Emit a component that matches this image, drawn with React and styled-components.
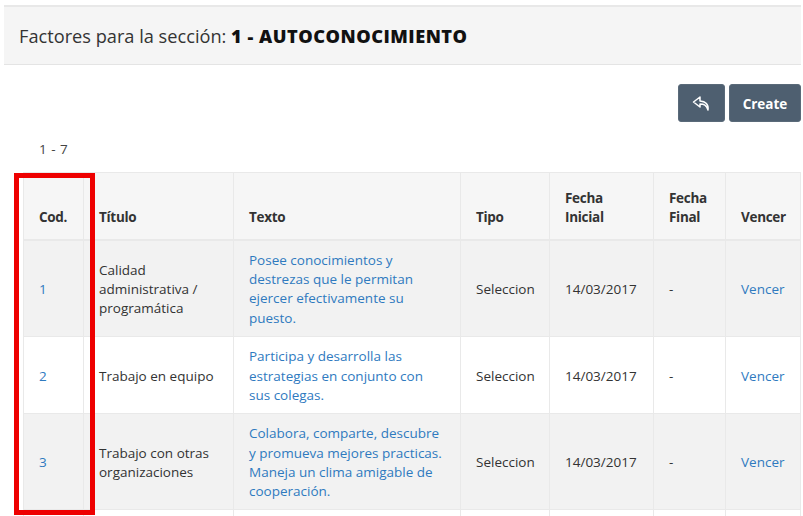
import React from 'react'
import styled, { createGlobalStyle } from 'styled-components'

const GlobalStyle = createGlobalStyle`
  html, body {
    margin: 0;
    padding: 0;
    background: #fff;
  }
  body {
    height: 516px;
    overflow: hidden;
    font-family: "Open Sans", "Liberation Sans", sans-serif;
    font-size: 13.5px;
    color: #333;
  }
`

const Page = styled.div`
  position: relative;
  height: 516px;
  padding: 5px 2px 0 4px;
  box-sizing: border-box;
  overflow: hidden;
`

const Header = styled.div`
  height: 60px;
  box-sizing: border-box;
  display: flex;
  align-items: center;
  padding-left: 15px;
  background: #f5f5f5;
  border-top: 2px solid #e8e8e8;
  border-bottom: 1px solid #e4e4e4;
  font-size: 18.2px;
  color: #333;
  white-space: pre;

  strong {
    color: #111;
    font-weight: 800;
    letter-spacing: 0.5px;
  }
`

const Toolbar = styled.div`
  display: flex;
  justify-content: flex-end;
  gap: 4px;
  margin-top: 19px;
`

const ToolButton = styled.button`
  width: ${p => p.$width}px;
  height: 38px;
  display: flex;
  align-items: center;
  justify-content: center;
  padding: 1px 0 0;
  border: 1px solid #5a6a79;
  border-radius: 3px;
  background: #4e5f70;
  color: #fff;
  font-family: inherit;
  font-size: 13.5px;
  font-weight: 700;
`

const Count = styled.div`
  margin: 18px 0 14px 35px;
  line-height: 18px;
  word-spacing: 1px;
  color: #444;
`

const Table = styled.table`
  width: 777px;
  margin-left: 19px;
  border-collapse: collapse;
  table-layout: fixed;
  line-height: 19.2px;
`

const Head = styled.th`
  width: ${p => p.$width}px;
  height: 67px;
  padding: 0 15px 11px;
  box-sizing: border-box;
  vertical-align: bottom;
  text-align: left;
  background: #f6f6f6;
  border: 1px solid #e9e9e9;
  border-bottom-width: 2px;
  color: #333;
  font-weight: 700;
  letter-spacing: -0.3px;
`

const Row = styled.tr`
  background: ${p => (p.$striped ? '#f2f2f2' : '#fff')};
`

const Cell = styled.td`
  padding: 10.5px 15px 8px;
  border: 1px solid #e9e9e9;
  vertical-align: middle;
  color: #333;
`

const CellLink = styled.a`
  color: #2f7abf;
  text-decoration: none;
`

const Highlight = styled.div`
  position: absolute;
  left: 14px;
  top: 173px;
  width: 71px;
  height: 332px;
  border: 5px solid #ee0000;
  pointer-events: none;
`

const columns = [
  { label: 'Cod.', width: 60 },
  { label: 'Título', width: 150 },
  { label: 'Texto', width: 227 },
  { label: 'Tipo', width: 89 },
  { label: 'Fecha Inicial', width: 104 },
  { label: 'Fecha Final', width: 72 },
  { label: 'Vencer', width: 75 },
]

const rows = [
  {
    cod: 1,
    titulo: 'Calidad administrativa / programática',
    texto: 'Posee conocimientos y destrezas que le permitan ejercer efectivamente su puesto.',
  },
  {
    cod: 2,
    titulo: 'Trabajo en equipo',
    texto: 'Participa y desarrolla las estrategias en conjunto con sus colegas.',
  },
  {
    cod: 3,
    titulo: 'Trabajo con otras organizaciones',
    texto: 'Colabora, comparte, descubre y promueva mejores practicas. Maneja un clima amigable de cooperación.',
  },
]

function BackIcon() {
  return (
    <svg width="19" height="15" viewBox="0 0 19 15" fill="none" stroke="#fff" strokeWidth="1.5" strokeLinejoin="round">
      <path d="M8 1 1.5 6l6.500 5V8c4 0 6.400.8 8 6 .8-5.600-2.400-8.800-8-9z" />
    </svg>
  )
}

export default function App() {
  return (
    <>
      <GlobalStyle />
      <Page>
        <Header>
          Factores para la sección: <strong>1 - AUTOCONOCIMIENTO</strong>
        </Header>
        <Toolbar>
          <ToolButton $width={47}><BackIcon /></ToolButton>
          <ToolButton $width={72}>Create</ToolButton>
        </Toolbar>
        <Count>1 - 7</Count>
        <Table>
          <thead>
            <tr>
              {columns.map(col => (
                <Head key={col.label} $width={col.width}>{col.label}</Head>
              ))}
            </tr>
          </thead>
          <tbody>
            {rows.map((row, i) => (
              <Row key={row.cod} $striped={i % 2 === 0}>
                <Cell><CellLink href="#">{row.cod}</CellLink></Cell>
                <Cell>{row.titulo}</Cell>
                <Cell><CellLink href="#">{row.texto}</CellLink></Cell>
                <Cell>Seleccion</Cell>
                <Cell>14/03/2017</Cell>
                <Cell>-</Cell>
                <Cell><CellLink href="#">Vencer</CellLink></Cell>
              </Row>
            ))}
            <Row>
              {columns.map(col => <Cell key={col.label}>&nbsp;</Cell>)}
            </Row>
          </tbody>
        </Table>
        <Highlight />
      </Page>
    </>
  )
}
